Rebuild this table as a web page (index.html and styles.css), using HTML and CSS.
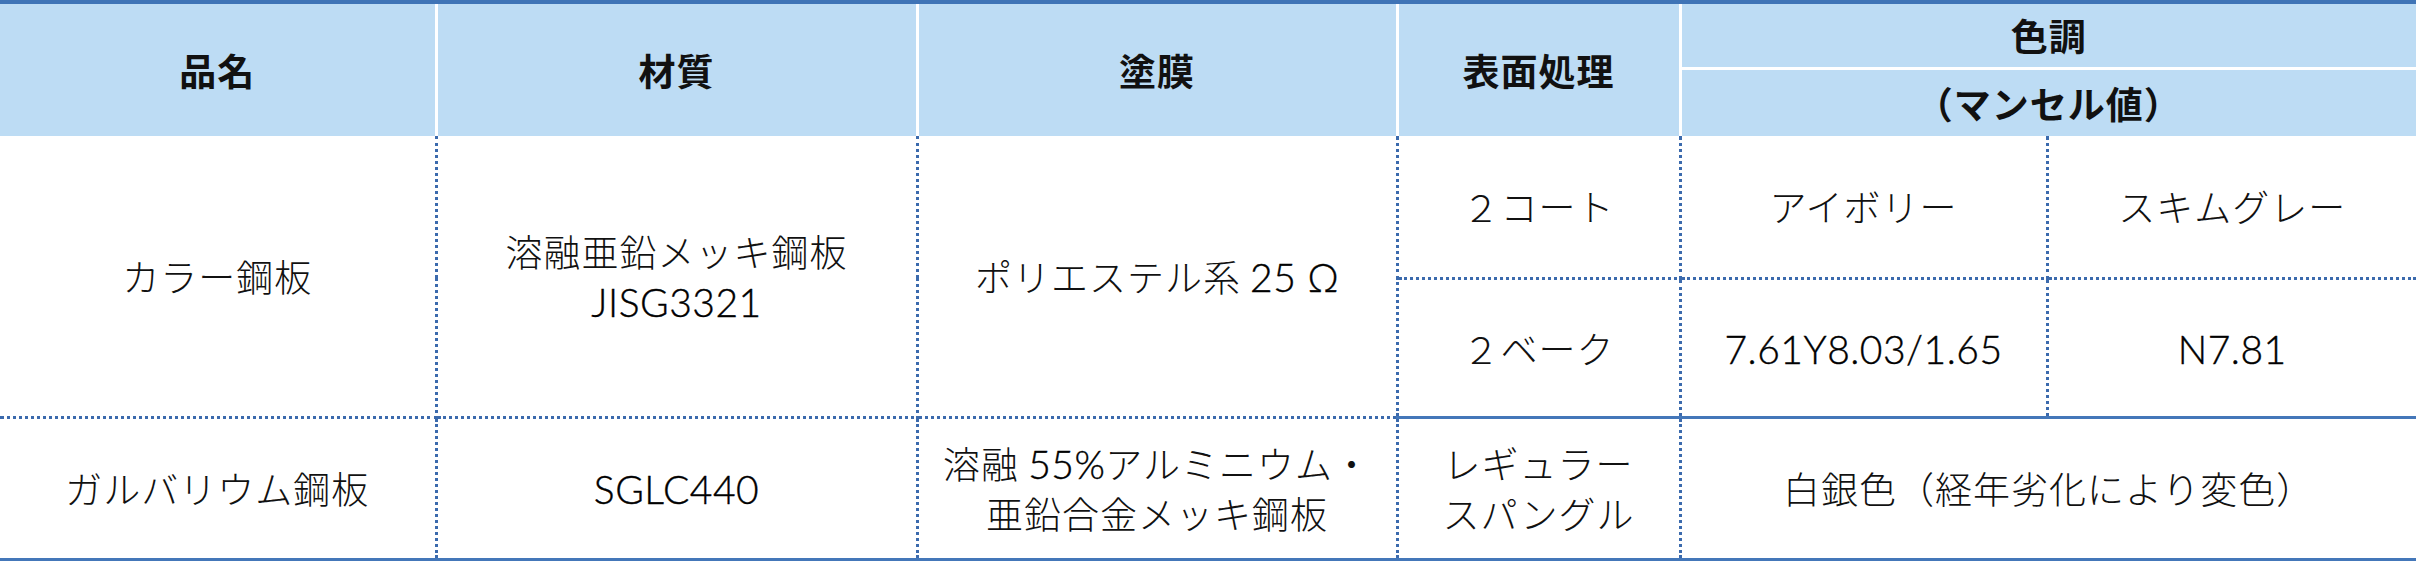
FILE: index.html
```html
<!DOCTYPE html>
<html lang="ja">
<head>
<meta charset="utf-8">
<title>仕様表</title>
<link rel="stylesheet" href="styles.css">
</head>
<body>
<table class="spec">
  <colgroup>
    <col class="c1"><col class="c2"><col class="c3"><col class="c4"><col class="c5"><col class="c6">
  </colgroup>
  <thead>
    <tr class="h1">
      <th rowspan="2" class="hv">品名</th>
      <th rowspan="2" class="hv">材質</th>
      <th rowspan="2" class="hv">塗膜</th>
      <th rowspan="2" class="hv">表面処理</th>
      <th colspan="2" class="hsplit">色調</th>
    </tr>
    <tr class="h2">
      <th colspan="2" class="hsub">（マンセル値）</th>
    </tr>
  </thead>
  <tbody>
    <tr class="r1">
      <td rowspan="2" class="vr dotb">カラー鋼板</td>
      <td rowspan="2" class="vr dotb"><div class="line">溶融亜鉛メッキ鋼板</div><div class="line"><span class="lat">JISG3321</span></div></td>
      <td rowspan="2" class="vr dotb">ポリエステル系 <span class="lat">25 Ω</span></td>
      <td class="vr dotb">２コート</td>
      <td class="vr dotb">アイボリー</td>
      <td class="dotb">スキムグレー</td>
    </tr>
    <tr class="r2">
      <td class="vr solb">２ベーク</td>
      <td class="vr solb"><span class="lat">7.61Y8.03/1.65</span></td>
      <td class="solb"><span class="lat">N7.81</span></td>
    </tr>
    <tr class="r3">
      <td class="vr endb">ガルバリウム鋼板</td>
      <td class="vr endb"><span class="lat">SGLC440</span></td>
      <td class="vr endb"><div class="line">溶融 <span class="lat">55%</span>アルミニウム・</div><div class="line">亜鉛合金メッキ鋼板</div></td>
      <td class="vr endb"><div class="line">レギュラー</div><div class="line">スパングル</div></td>
      <td colspan="2" class="endb">白銀色（経年劣化により変色）</td>
    </tr>
  </tbody>
</table>
</body>
</html>
```

FILE: styles.css
```css
html, body {
  margin: 0;
  padding: 0;
  background: #ffffff;
}

body {
  font-family: "Noto Sans CJK JP", "Noto Sans", sans-serif;
  color: #1a1a1a;
}

.spec {
  width: 2416px;
  table-layout: fixed;
  border-collapse: collapse;
  border-top: 4px solid #3f74b6;
}

.c1 { width: 436px; }
.c2 { width: 481px; }
.c3 { width: 480px; }
.c4 { width: 283px; }
.c5 { width: 367px; }
.c6 { width: 369px; }

.spec th,
.spec td {
  padding: 0;
  text-align: center;
  vertical-align: middle;
  font-size: 37px;
  line-height: 50px;
  letter-spacing: 1px;
}

.spec th {
  background: #bddcf4;
  font-weight: 700;
  color: #111111;
}

.spec thead .hv {
  border-right: 3px solid #ffffff;
}

.h1 { height: 66px; }
.h2 { height: 68px; }

.hsplit {
  border-bottom: 3px solid #ffffff;
}

.spec td {
  font-weight: 300;
  color: #111111;
}

.line {
  height: 50px;
  line-height: 50px;
  white-space: nowrap;
}

.lat {
  font-family: Lato, "Liberation Sans", sans-serif;
  font-weight: 300;
  font-size: 39px;
  letter-spacing: 0.5px;
  line-height: 1;
  color: #000000;
  -webkit-text-stroke: 0.4px #000000;
}

.vr {
  border-right: 3px dotted #3b6aad;
}

.dotb {
  border-bottom: 3px dotted #3b6aad;
}

.solb {
  border-bottom: 3px solid #4477b9;
}

.endb {
  border-bottom: 3px solid #4477b9;
}

.r1 { height: 142px; }
.r2 { height: 139px; }
.r3 { height: 142px; }
```
